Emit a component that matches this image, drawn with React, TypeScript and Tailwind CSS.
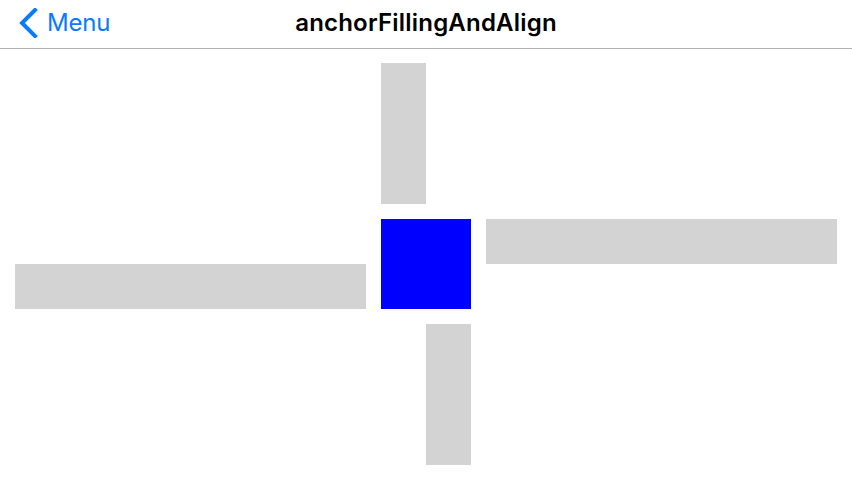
import React from 'react';

const App: React.FC = () => {
  return (
    <div className="h-[480px] w-[852px] bg-white" style={{ fontFamily: 'Inter, "Noto Sans", sans-serif' }}>
      {/* Nav bar */}
      <div className="relative flex h-[49px] items-center border-b border-[#b2b2b2]">
        <div className="flex items-center pl-[18px] text-[#0a7aff]">
          <svg width="20" height="30" viewBox="0 0 20 30" className="-mt-[3px]">
            <path d="M17 2 L4 15 L17 28" fill="none" stroke="currentColor" strokeWidth="4" strokeLinecap="square" />
          </svg>
          <span className="ml-[9px] -mt-[3px] text-[24px] leading-none tracking-[-0.2px]">Menu</span>
        </div>
        <div className="absolute inset-x-0 top-0 flex h-[48px] items-center justify-center">
          <span className="-mt-[3px] text-[24px] font-semibold leading-none tracking-[0.2px] text-black">anchorFillingAndAlign</span>
        </div>
      </div>

      {/* Content */}
      <div className="grid grid-cols-[351px_15px_45px_45px_15px_351px] grid-rows-[141px_15px_45px_45px_15px_141px] pl-[15px] pt-[14px]">
        <div className="col-start-3 row-start-1 bg-[#d3d3d3]" />
        <div className="col-span-2 col-start-3 row-span-2 row-start-3 bg-[#0000ff]" />
        <div className="col-start-6 row-start-3 bg-[#d3d3d3]" />
        <div className="col-start-1 row-start-4 bg-[#d3d3d3]" />
        <div className="col-start-4 row-start-6 bg-[#d3d3d3]" />
      </div>
    </div>
  );
};

export default App;
